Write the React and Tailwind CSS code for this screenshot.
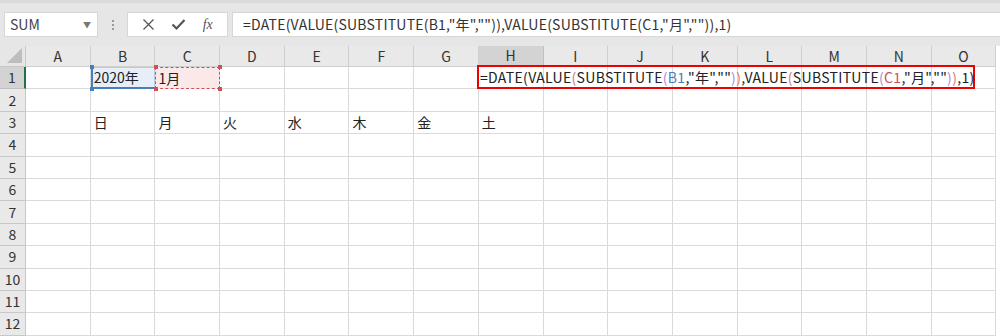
import React from "react"

const COLS = ["A", "B", "C", "D", "E", "F", "G", "H", "I", "J", "K", "L", "M", "N", "O"]
const ROWS = [1, 2, 3, 4, 5, 6, 7, 8, 9, 10, 11, 12]
const DAYS = { B: "日", C: "月", D: "火", E: "水", F: "木", G: "金", H: "土" }

const font = { fontFamily: '"Noto Sans CJK JP", "Noto Sans", sans-serif' }

function Lv2({ children }) {
  return <span className="text-[#e0707a]">{children}</span>
}
function Lv3({ children }) {
  return <span className="text-[#a98bd6]">{children}</span>
}

export default function App() {
  return (
    <div className="w-[1000px] h-[336px] overflow-hidden bg-white text-[#222]" style={font}>
      {/* FORMULA BAR */}
      <div className="h-[46px] bg-[#e6e6e6] border-t-[3px] border-[#dadada] flex items-center pl-[4px]">
        <div className="w-[94px] h-[25px] bg-white border border-[#d6d6d6] flex items-center justify-between pl-[5px] pr-[6px]">
          <span className="text-[14px] text-[#444]">SUM</span>
          <span className="text-[8px] text-[#777]">▼</span>
        </div>
        <div className="w-[29px] flex flex-col items-center gap-[2px]">
          <span className="w-[2px] h-[2px] bg-[#999]" />
          <span className="w-[2px] h-[2px] bg-[#999]" />
          <span className="w-[2px] h-[2px] bg-[#999]" />
        </div>
        <div className="w-[101px] h-[25px] bg-white border border-[#d6d6d6] flex items-center justify-around px-[6px]">
          <svg width="13" height="13" viewBox="0 0 13 13">
            <path d="M1.5 1.5L11.5 11.5M11.5 1.5L1.5 11.5" stroke="#555" strokeWidth="1.3" />
          </svg>
          <svg width="15" height="13" viewBox="0 0 15 13">
            <path d="M1.5 6.5L5.5 10.5L13.5 2" stroke="#555" strokeWidth="2.2" fill="none" />
          </svg>
          <span className="text-[14px] italic text-[#555]" style={{ fontFamily: '"Liberation Serif", serif' }}>
            fx
          </span>
        </div>
        <div className="ml-[4px] flex-1 h-[25px] bg-white border-y border-l border-[#d6d6d6] flex items-center pl-[10px] text-[14px] text-[#333] tracking-[0.22px]">
          =DATE(VALUE(SUBSTITUTE(B1,"年","")),VALUE(SUBSTITUTE(C1,"月","")),1)
        </div>
      </div>

      {/* GRID */}
      <div className="relative">
        <div className="grid grid-cols-[26px_repeat(15,64.7px)] grid-rows-[21px_repeat(12,22.4px)]">
          {/* corner */}
          <div className="bg-[#e6e6e6] border-r border-b border-[#c8c8c8] flex items-end justify-end p-[3px]">
            <svg width="15" height="15" viewBox="0 0 15 15">
              <path d="M15 0L15 15L0 15Z" fill="#bdbdbd" />
            </svg>
          </div>
          {COLS.map((c) => (
            <div
              key={c}
              className={
                c === "H"
                  ? "bg-[#d3d3d3] border-r border-[#c0c0c0] border-b-2 border-b-[#217346] flex items-center justify-center text-[14px] text-[#333]"
                  : "bg-[#e9e9e9] border-r border-b border-[#cfcfcf] flex items-center justify-center text-[14px] text-[#333]"
              }
            >
              {c}
            </div>
          ))}

          {ROWS.map((r) => (
            <React.Fragment key={r}>
              <div
                className={
                  r === 1
                    ? "bg-[#d3d3d3] border-b border-[#c0c0c0] border-r-2 border-r-[#217346] flex items-center justify-center text-[14px] text-[#333]"
                    : "bg-[#e9e9e9] border-b border-r border-[#c8c8c8] flex items-center justify-center text-[14px] text-[#333]"
                }
              >
                {r}
              </div>
              {COLS.map((c) => {
                let cls = "border-r border-b border-[#dadada] flex items-center pl-[3px] text-[14px] text-[#222]"
                let text = ""
                if (r === 1 && c === "B") {
                  cls = "bg-[#e7eef8] border-l-2 border-b-2 border-[#4a7ebb] border-t border-t-[#b7cbe6] border-r border-r-[#b7cbe6] flex items-center pl-[1px] text-[14px] text-[#222]"
                  text = "2020年"
                }
                if (r === 1 && c === "C") {
                  cls = "bg-[#fbe9ea] border border-dashed border-[#d0505a] flex items-center pl-[2px] text-[14px] text-[#222]"
                  text = "1月"
                }
                if (r === 3 && DAYS[c]) text = DAYS[c]
                return (
                  <div key={c} className={cls}>
                    {text}
                  </div>
                )
              })}
            </React.Fragment>
          ))}
        </div>

        {/* range corner handles */}
        <span className="absolute left-[90px] top-[19px] w-[4px] h-[4px] bg-[#4a7ebb]" />
        <span className="absolute left-[90px] top-[41px] w-[4px] h-[4px] bg-[#4a7ebb]" />
        <span className="absolute left-[154px] top-[19px] w-[4px] h-[4px] bg-[#d0505a]" />
        <span className="absolute left-[218px] top-[19px] w-[4px] h-[4px] bg-[#d0505a]" />
        <span className="absolute left-[154px] top-[41px] w-[4px] h-[4px] bg-[#d0505a]" />
        <span className="absolute left-[218px] top-[41px] w-[4px] h-[4px] bg-[#d0505a]" />

        {/* active cell outline under editor */}
        <span className="absolute left-[479px] top-[41px] w-[63px] h-[2px] bg-[#555]" />

        {/* in-cell editor */}
        <div className="absolute left-[477px] top-[19px] w-[498px] h-[24px] border-2 border-[#ee0000] flex items-center pl-[1px] text-[14px] text-[#222] whitespace-nowrap tracking-[0.31px]">
          =DATE(VALUE<Lv2>(</Lv2>SUBSTITUTE<Lv3>(</Lv3>
          <span className="text-[#4a7ebb]">B1</span>,"年",""<Lv3>)</Lv3>
          <Lv2>)</Lv2>,VALUE<Lv2>(</Lv2>SUBSTITUTE<Lv3>(</Lv3>
          <span className="text-[#d0505a]">C1</span>,"月",""<Lv3>)</Lv3>
          <Lv2>)</Lv2>,1)
        </div>
      </div>
    </div>
  )
}
